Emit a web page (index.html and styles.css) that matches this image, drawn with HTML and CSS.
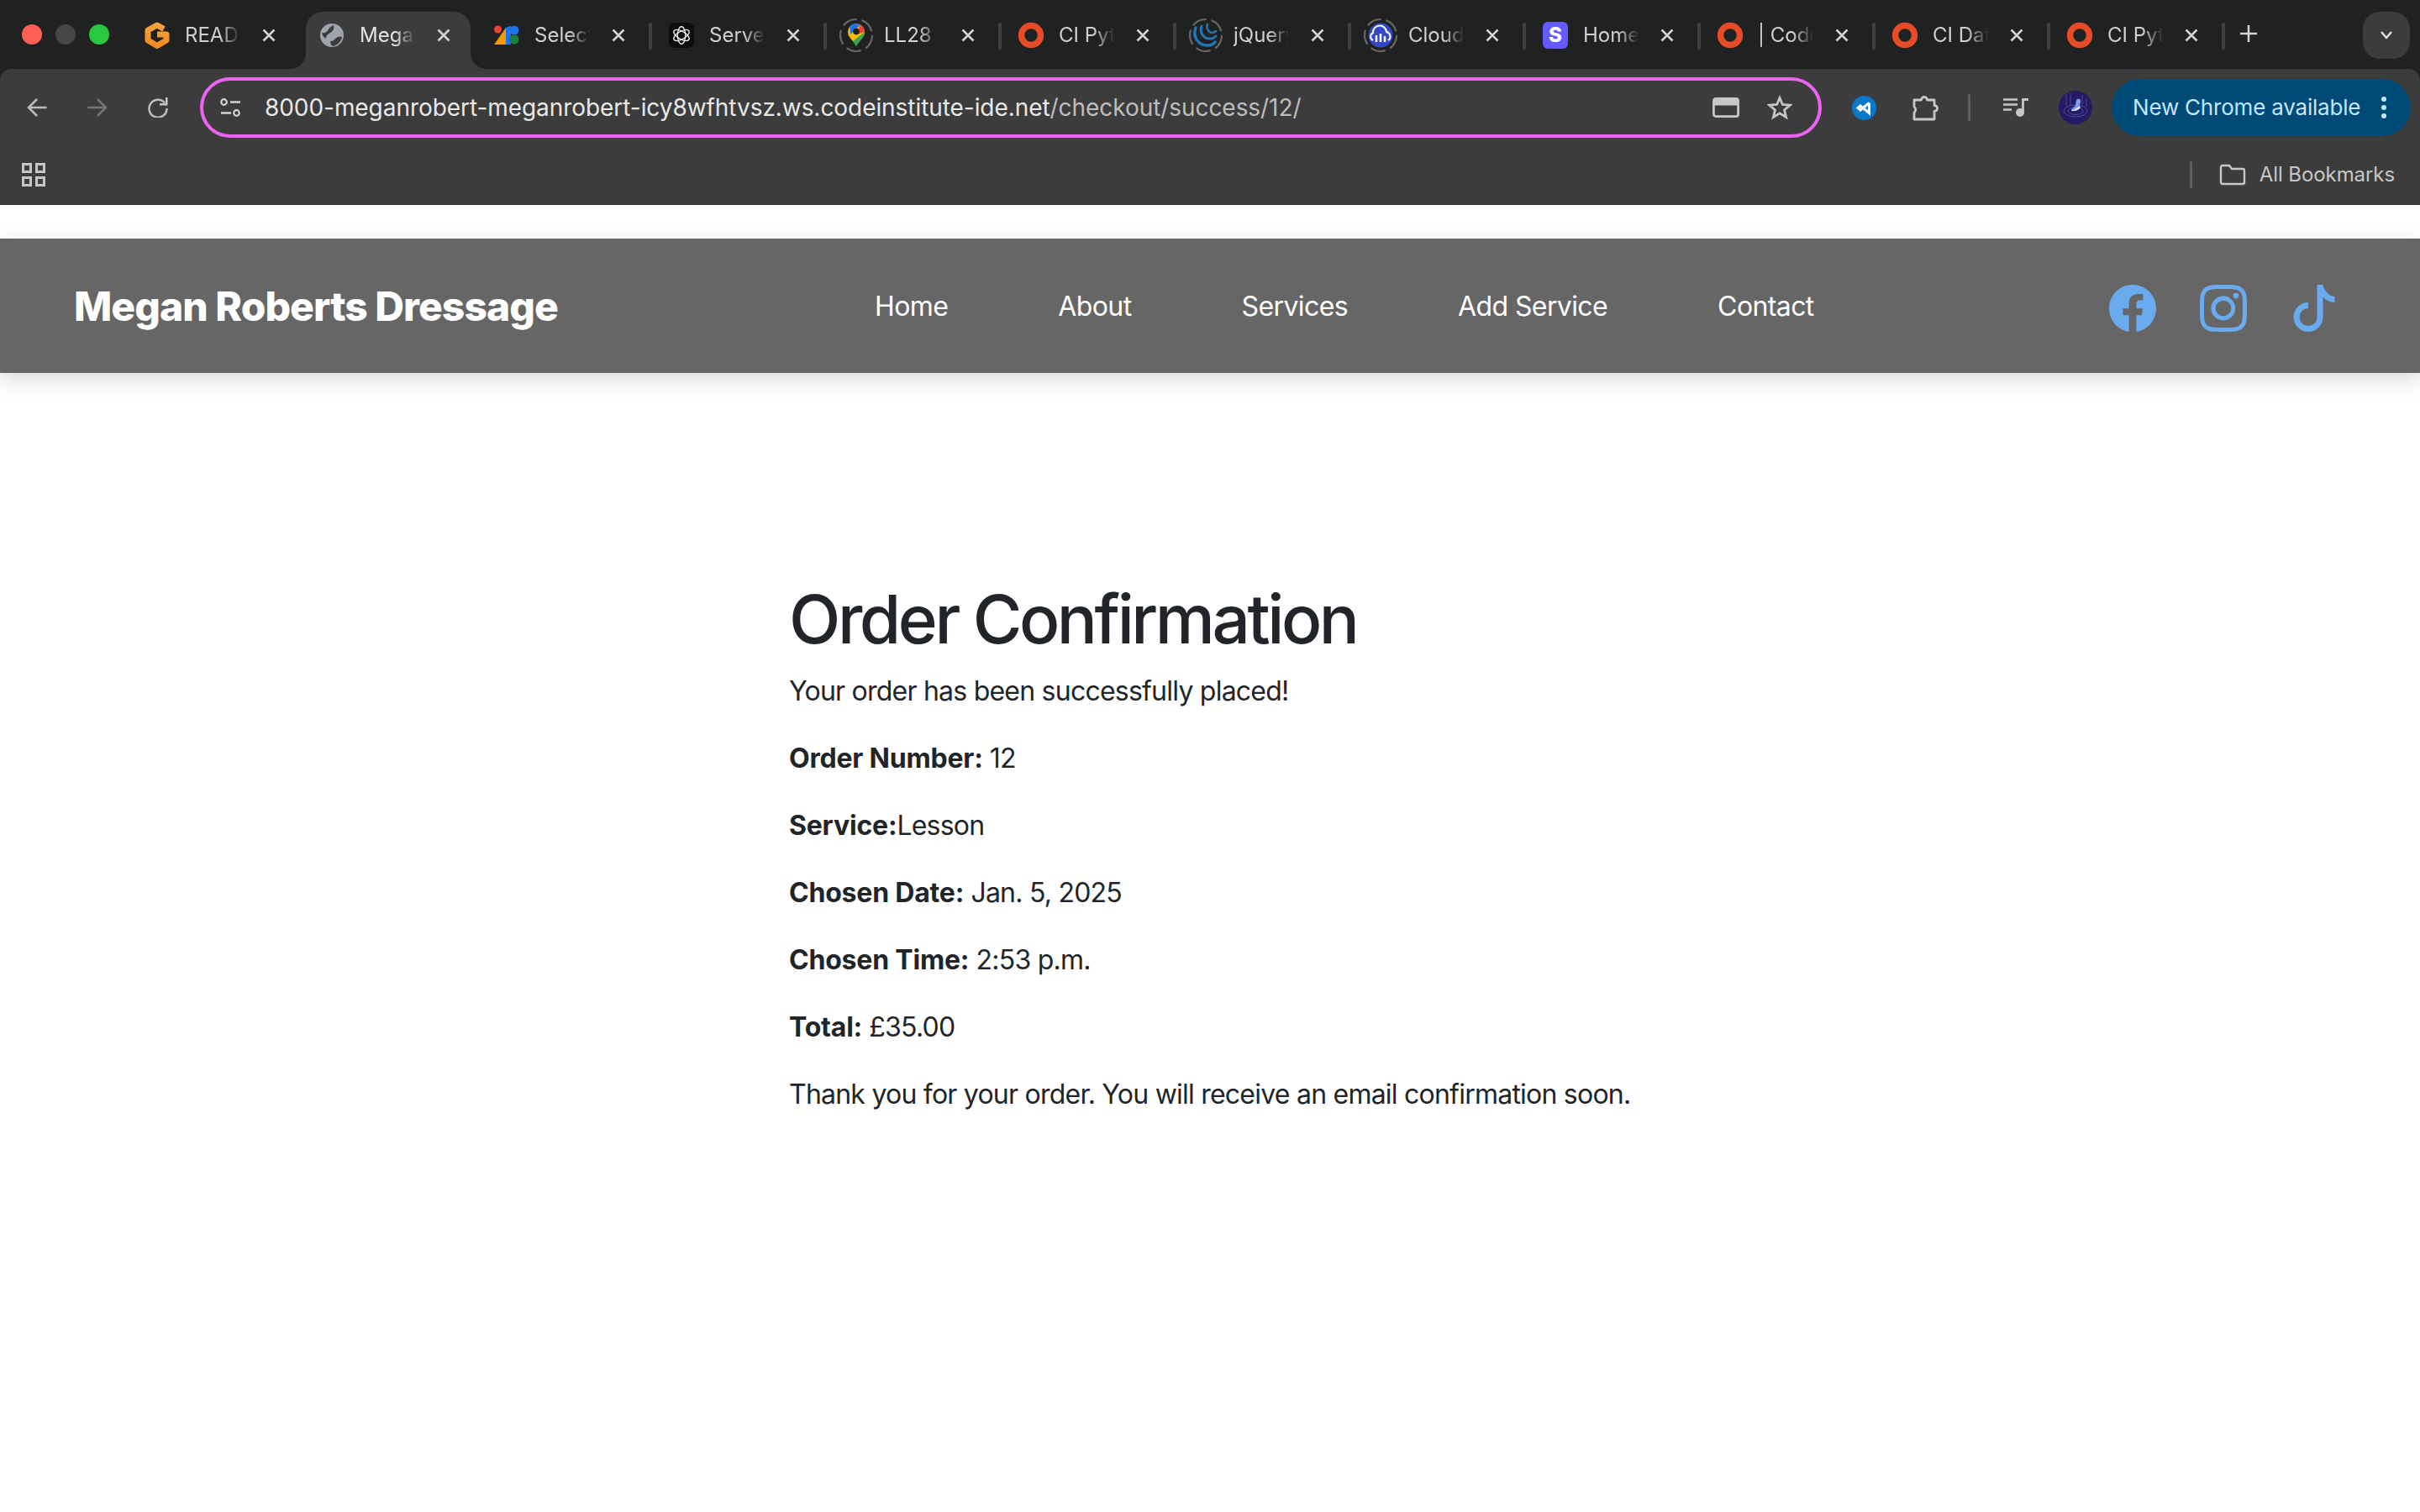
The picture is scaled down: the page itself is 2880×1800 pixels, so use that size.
FILE: index.html
```html
<!doctype html>
<html lang="en">
  <head>
    <meta charset="UTF-8" />
    <title>Order Confirmation</title>
    <link rel="stylesheet" href="styles.css">
  </head>
  <body>
    <svg class="defs" width="0" height="0">
      <symbol id="ci-ring" viewBox="0 0 30 32">
        <circle cx="15" cy="16" r="11.500" fill="none" stroke="#e64a27" stroke-width="7.500" />
      </symbol>
      <symbol id="close" viewBox="0 0 16 16">
        <path d="M1.500 1.500l13 13M14.500 1.500l-13 13" stroke="#d4d4d4" stroke-width="2.600" fill="none" />
      </symbol>
      <linearGradient id="g-orange" x1="0" y1="0" x2="0" y2="1">
        <stop offset="0" stop-color="#f8a23c" />
        <stop offset="1" stop-color="#f08a24" />
      </linearGradient>
    </svg>

    <!-- browser frame -->
    <header class="browser">
      <div class="tab-strip">
        <div class="lights">
          <span class="light light-red"></span>
          <span class="light light-grey"></span>
          <span class="light light-green"></span>
        </div>
        <div class="tabs">
          <div class="tab">
            <div class="tab-inner">
              <svg class="favicon" viewBox="0 0 30 32"><path d="M23 8.500L15 4 4 10v12l11 6.500L26 22v-7H15" fill="none" stroke="url(#g-orange)" stroke-width="7" stroke-linejoin="round" /></svg>
              <span class="tab-title">README</span>
              <svg class="tab-close"><use href="#close" /></svg>
            </div>
          </div>
          <div class="tab active">
            <div class="tab-inner">
              <svg class="favicon" viewBox="0 0 30 32"><circle cx="15" cy="16" r="14" fill="#a0a5ad" /><path d="M3 13c4 1 6-1 8-4 1-2 3-4 6-5 1 3 0 7-4 9-3 2-5 3-5 7-2-1-4-3-5-7zM27 18c-3-1-6 0-8 2-1 2-3 3-6 3 0 3 1 5 3 6 5-1 10-5 11-11z" fill="#3c3c3c" /></svg>
              <span class="tab-title">Megan Roberts</span>
              <svg class="tab-close"><use href="#close" /></svg>
            </div>
          </div>
          <div class="tab">
            <div class="tab-inner">
              <svg class="favicon" viewBox="0 0 30 32"><circle cx="4.500" cy="9" r="4.500" fill="#ea4335" /><path d="M0 27L14 7v20z" fill="#f29900" /><path d="M14 7l5-2h1v22h-6z" fill="#1a73e8" /><circle cx="24" cy="10" r="5.500" fill="#1a73e8" /><circle cx="24" cy="21" r="5.500" fill="#188038" /></svg>
              <span class="tab-title">Select</span>
              <svg class="tab-close"><use href="#close" /></svg>
            </div>
          </div>
          <div class="tab sep">
            <div class="tab-inner">
              <svg class="favicon" viewBox="0 0 32 32">
                <rect width="32" height="32" rx="7" fill="#0d0d0d" />
                <g fill="none" stroke="#fff" stroke-width="1.300">
                  <ellipse cx="16" cy="16" rx="5" ry="11" />
                  <ellipse cx="16" cy="16" rx="5" ry="11" transform="rotate(60 16 16)" />
                  <ellipse cx="16" cy="16" rx="5" ry="11" transform="rotate(120 16 16)" />
                </g>
              </svg>
              <span class="tab-title">Server</span>
              <svg class="tab-close"><use href="#close" /></svg>
            </div>
          </div>
          <div class="tab sep">
            <div class="tab-inner">
              <svg class="favicon favicon-ring" viewBox="0 0 40 40"><circle cx="20" cy="20" r="19" fill="none" stroke="#666" stroke-width="2.200" stroke-dasharray="18 5.900" /><path d="M20 6a10 10 0 0 1 10 10c0 7-7 10-10 17-3-7-10-10-10-17A10 10 0 0 1 20 6z" fill="#fbbc04" /><path d="M12.500 9.500A10 10 0 0 1 25 7.500L13 19z" fill="#1a73e8" /><path d="M25 7.500A10 10 0 0 1 30 16l-10 3z" fill="#ea4335" /><path d="M30 16c0 7-7 10-10 17l-4-6z" fill="#34a853" /><circle cx="20" cy="15.500" r="3.800" fill="#202222" /></svg>
              <span class="tab-title">LL28 5</span>
              <svg class="tab-close"><use href="#close" /></svg>
            </div>
          </div>
          <div class="tab sep">
            <div class="tab-inner">
              <svg class="favicon"><use href="#ci-ring" /></svg>
              <span class="tab-title">CI Python</span>
              <svg class="tab-close"><use href="#close" /></svg>
            </div>
          </div>
          <div class="tab sep">
            <div class="tab-inner">
              <svg class="favicon favicon-ring" viewBox="0 0 40 40"><circle cx="20" cy="20" r="19" fill="none" stroke="#666" stroke-width="2.200" stroke-dasharray="18 5.900" /><g fill="none" stroke="#1f76b5" stroke-linecap="round"><path d="M8 11c-4 11 3 21 14 21 4 0 7-1 9-4" stroke-width="3.500" /><path d="M15 9c-3 8 3 16 11 15 3 0 5-2 6-3" stroke-width="3" /><path d="M22 7c-2 6 2 10 6 10 2 0 3-1 4-2" stroke-width="2.500" /></g></svg>
              <span class="tab-title">jQuery</span>
              <svg class="tab-close"><use href="#close" /></svg>
            </div>
          </div>
          <div class="tab sep">
            <div class="tab-inner">
              <svg class="favicon favicon-ring" viewBox="0 0 40 40"><circle cx="20" cy="20" r="19" fill="none" stroke="#666" stroke-width="2.200" stroke-dasharray="18 5.900" /><circle cx="20" cy="20" r="14.500" fill="#3448c5" /><path d="M11 26a5 5 0 0 1 0-9 8 8 0 0 1 16-1 5.500 5.500 0 0 1 2 10" fill="none" stroke="#fff" stroke-width="2" /><path d="M15 20v8M20 18v10M25 21v7" stroke="#fff" stroke-width="2.500" /></svg>
              <span class="tab-title">Cloudinary</span>
              <svg class="tab-close"><use href="#close" /></svg>
            </div>
          </div>
          <div class="tab sep">
            <div class="tab-inner">
              <span class="favicon favicon-s">S</span>
              <span class="tab-title">Home</span>
              <svg class="tab-close"><use href="#close" /></svg>
            </div>
          </div>
          <div class="tab sep">
            <div class="tab-inner">
              <svg class="favicon"><use href="#ci-ring" /></svg>
              <span class="tab-title">| Code</span>
              <svg class="tab-close"><use href="#close" /></svg>
            </div>
          </div>
          <div class="tab sep">
            <div class="tab-inner">
              <svg class="favicon"><use href="#ci-ring" /></svg>
              <span class="tab-title">CI Data</span>
              <svg class="tab-close"><use href="#close" /></svg>
            </div>
          </div>
          <div class="tab sep">
            <div class="tab-inner">
              <svg class="favicon"><use href="#ci-ring" /></svg>
              <span class="tab-title">CI Python</span>
              <svg class="tab-close"><use href="#close" /></svg>
            </div>
          </div>
        </div>
        <span class="tabs-end"></span>
        <svg class="new-tab" viewBox="0 0 20 20"><path d="M10 0v20M0 10h20" stroke="#d4d4d4" stroke-width="2.500" /></svg>
        <div class="tab-search">
          <svg class="tab-search-icon" viewBox="0 0 16 10"><path d="M2 1l6 7 6-7" fill="none" stroke="#e3e3e3" stroke-width="2.400" /></svg>
        </div>
      </div>

      <div class="toolbar">
        <svg class="tool" viewBox="0 0 24 24"><path d="M23.500 12H2.500M12 2L2 12l10 10" fill="none" stroke="#bdbdbd" stroke-width="2.500" /></svg>
        <svg class="tool tool-gap" viewBox="0 0 24 24"><path d="M.5 12h21M12 2l10 10-10 10" fill="none" stroke="#757575" stroke-width="2.500" /></svg>
        <svg class="tool tool-gap" viewBox="0 0 24 24"><path d="M20 6.500A10.500 10.500 0 1 0 22.500 13" fill="none" stroke="#bdbdbd" stroke-width="2.500" /><path d="M23.500 0v9.500H14v-2.500h7V0z" fill="#c7c7c7" /></svg>

        <div class="omnibox">
          <svg class="site-icon" viewBox="0 0 24 22"><circle cx="4.500" cy="4.500" r="3.300" fill="none" stroke="#d4d4d4" stroke-width="2.200" /><path d="M12 4.500h12M1 17.500h12" stroke="#d4d4d4" stroke-width="2.400" /><circle cx="19.500" cy="17.500" r="3.300" fill="none" stroke="#d4d4d4" stroke-width="2.200" /></svg>
          <span class="url">8000-meganrobert-meganrobert-icy8wfhtvsz.ws.codeinstitute-ide.net<span class="url-path">/checkout/success/12/</span></span>
          <svg class="omni-card" viewBox="0 0 32 24"><rect x="1.400" y="1.400" width="29.200" height="21.200" rx="2.500" fill="none" stroke="#c7c7c7" stroke-width="2.800" /><rect x="2" y="2" width="28" height="7.500" fill="#c7c7c7" /></svg>
          <svg class="omni-star" viewBox="0 0 30 30"><path d="M15 3.500l3.400 8 8.800.7-6.700 5.700 2.100 8.600-7.600-4.600-7.600 4.600 2.100-8.600-6.700-5.700 8.800-.7z" fill="none" stroke="#c7c7c7" stroke-width="2.800" /></svg>
        </div>

        <svg class="ext-vscode" viewBox="0 0 29 29"><circle cx="14.500" cy="14.500" r="14.500" fill="#0a78c9" /><path d="M20.500 8.500v12L10 12l-3 2.500 3 2.500 10.500-8.500" fill="none" stroke="#fff" stroke-width="3" /></svg>
        <svg class="ext-puzzle" viewBox="0 0 32 31"><path d="M2 6h8.500a3.500 3.500 0 0 1 7 0H26v6.500a3.500 3.500 0 0 1 0 7V29H2v-8a4.500 4.500 0 0 0 0-7z" fill="none" stroke="#c7c7c7" stroke-width="2.800" stroke-linejoin="round" /></svg>
        <span class="tool-sep"></span>
        <svg class="ext-music" viewBox="0 0 30 22"><path d="M0 1.500h17M0 7.500h17M0 13.500h10" stroke="#c7c7c7" stroke-width="2.600" /><path d="M23.500 17V1.500H30" fill="none" stroke="#c7c7c7" stroke-width="2.800" /><circle cx="20" cy="17" r="5" fill="#c7c7c7" /></svg>
        <svg class="avatar" viewBox="0 0 40 40"><circle cx="20" cy="20" r="20" fill="#241a63" /><g fill="none" stroke="#5d55a8" stroke-width=".8"><ellipse cx="20" cy="24" rx="14" ry="7" /><ellipse cx="20" cy="24" rx="9" ry="4.500" /><path d="M9 4v14M14 3v14M28 5v12M33 9v10" /></g><path d="M22 10c3-1 5 1 4 4-1 2-1 3-1 5-3 4-8 6-10 5-1-2 2-3 4-5 2-3 1-7 3-9z" fill="#7d9af5" /><path d="M15 23c3 0 7-2 10-5l1 2c-3 4-8 5-11 3z" fill="#dfe6ff" /></svg>

        <div class="update-pill">
          <span>New Chrome available</span>
          <svg class="pill-dots" viewBox="0 0 6 28"><circle cx="3" cy="4" r="3" fill="#c2e7ff" /><circle cx="3" cy="14" r="3" fill="#c2e7ff" /><circle cx="3" cy="24" r="3" fill="#c2e7ff" /></svg>
        </div>
      </div>

      <div class="bookmarks">
        <svg class="apps-icon" viewBox="0 0 28 28"><g fill="none" stroke="#c7c7c7" stroke-width="3"><rect x="1.500" y="1.500" width="9" height="9" /><rect x="17.500" y="1.500" width="9" height="9" /><rect x="1.500" y="17.500" width="9" height="9" /><rect x="17.500" y="17.500" width="9" height="9" /></g></svg>
        <span class="bookmarks-sep"></span>
        <svg class="folder-icon" viewBox="0 0 32 26"><path d="M2 4a2 2 0 0 1 2-2h8l3 4h13a2 2 0 0 1 2 2v14a2 2 0 0 1-2 2H4a2 2 0 0 1-2-2z" fill="none" stroke="#c7c7c7" stroke-width="2.400" /></svg>
        <span class="bookmarks-label">All Bookmarks</span>
      </div>
    </header>

    <!-- site -->
    <nav class="navbar">
      <a class="brand" href="#">Megan Roberts Dressage</a>
      <ul class="nav-links">
        <li><a href="#">Home</a></li>
        <li><a href="#">About</a></li>
        <li><a href="#">Services</a></li>
        <li><a href="#">Add Service</a></li>
        <li><a href="#">Contact</a></li>
      </ul>
      <div class="socials">
        <svg class="social" viewBox="0 0 16 16"><path d="M16 8.049c0-4.446-3.582-8.05-8-8.05C3.58 0-.002 3.603-.002 8.05c0 4.017 2.926 7.347 6.75 7.951v-5.625h-2.03V8.05H6.75V6.275c0-2.017 1.195-3.131 3.022-3.131.876 0 1.791.157 1.791.157v1.98h-1.009c-.993 0-1.303.621-1.303 1.258v1.51h2.218l-.354 2.326H9.25V16c3.824-.604 6.75-3.934 6.75-7.951" /></svg>
        <svg class="social" viewBox="0 0 16 16"><path d="M8 0C5.829 0 5.556.01 4.703.048 3.85.088 3.269.222 2.76.42a3.9 3.9 0 0 0-1.417.923A3.9 3.9 0 0 0 .42 2.76C.222 3.268.087 3.85.048 4.7.01 5.555 0 5.827 0 8.001c0 2.172.01 2.444.048 3.297.04.852.174 1.433.372 1.942.205.526.478.972.923 1.417.444.445.89.719 1.416.923.51.198 1.09.333 1.942.372C5.555 15.99 5.827 16 8 16s2.444-.01 3.298-.048c.851-.04 1.434-.174 1.943-.372a3.9 3.9 0 0 0 1.416-.923c.445-.445.718-.891.923-1.417.197-.509.332-1.09.372-1.942C15.99 10.445 16 10.173 16 8s-.01-2.445-.048-3.299c-.04-.851-.175-1.433-.372-1.941a3.9 3.9 0 0 0-.923-1.417A3.9 3.9 0 0 0 13.24.42c-.51-.198-1.092-.333-1.943-.372C10.443.01 10.172 0 7.998 0zm-.717 1.442h.718c2.136 0 2.389.007 3.232.046.78.035 1.204.166 1.486.275.373.145.64.319.92.599s.453.546.598.92c.11.281.24.705.275 1.485.039.843.047 1.096.047 3.231s-.008 2.389-.047 3.232c-.035.78-.166 1.203-.275 1.485a2.5 2.5 0 0 1-.599.919c-.28.28-.546.453-.92.598-.28.11-.704.24-1.485.276-.843.038-1.096.047-3.232.047s-2.39-.009-3.233-.047c-.78-.036-1.203-.166-1.485-.276a2.5 2.5 0 0 1-.92-.598 2.5 2.5 0 0 1-.6-.92c-.109-.281-.24-.705-.275-1.485-.038-.843-.046-1.096-.046-3.233s.008-2.388.046-3.231c.036-.78.166-1.204.276-1.486.145-.373.319-.64.599-.92s.546-.453.92-.598c.282-.11.705-.24 1.485-.276.738-.034 1.024-.044 2.515-.045zm4.988 1.328a.96.96 0 1 0 0 1.92.96.96 0 0 0 0-1.92m-4.27 1.122a4.109 4.109 0 1 0 0 8.217 4.109 4.109 0 0 0 0-8.217m0 1.441a2.667 2.667 0 1 1 0 5.334 2.667 2.667 0 0 1 0-5.334" /></svg>
        <svg class="social" viewBox="0 0 16 16"><path d="M9 0h1.980c.144.715.54 1.617 1.235 2.512C12.895 3.389 13.797 4 15 4v2c-1.753 0-3.070-.814-4-1.829V11a5 5 0 1 1-5-5v2a3 3 0 1 0 3 3z" /></svg>
      </div>
    </nav>

    <main class="order">
      <h1>Order Confirmation</h1>
      <p>Your order has been successfully placed!</p>
      <p><strong>Order Number:</strong> 12</p>
      <p><strong>Service:</strong>Lesson</p>
      <p><strong>Chosen Date:</strong> Jan. 5, 2025</p>
      <p><strong>Chosen Time:</strong> 2:53 p.m.</p>
      <p><strong>Total:</strong> £35.00</p>
      <p>Thank you for your order. You will receive an email confirmation soon.</p>
    </main>
  </body>
</html>
```

FILE: styles.css
```css
* {
  box-sizing: border-box;
}
body {
  font-family: Inter, "Liberation Sans", sans-serif;
  font-size: 32px;
  line-height: 48px;
  letter-spacing: -0.77px;
  color: #212529;
  background-color: #fff;
  margin: 0;
}
svg {
  display: block;
  flex-shrink: 0;
}
.defs {
  position: absolute;
}

/* browser frame */
.browser {
  background-color: #202222;
  color: #d4d4d4;
  letter-spacing: 0;
}
.tab-strip {
  display: flex;
  align-items: center;
  height: 82px;
  padding-left: 26px;
}
.lights {
  display: flex;
  gap: 16px;
  width: 122px;
}
.light {
  width: 24px;
  height: 24px;
  border-radius: 50%;
}
.light-red {
  background-color: #ff5f57;
}
.light-grey {
  background-color: #444746;
}
.light-green {
  background-color: #28c840;
}
.tabs {
  display: flex;
  align-self: flex-end;
}
.tab {
  display: flex;
  align-items: center;
  width: 208px;
  height: 68px;
}
.tab::before {
  content: "";
  width: 4px;
  height: 32px;
  margin-bottom: 10px;
  border-radius: 2px;
  flex-shrink: 0;
}
.tab.sep::before,
.tabs-end {
  background-color: #3f4141;
}
.tabs-end {
  width: 4px;
  height: 32px;
  margin-top: 4px;
  border-radius: 2px;
}
.tab-inner {
  position: relative;
  display: flex;
  align-items: center;
  width: 196px;
  height: 68px;
  margin-left: 4px;
  padding: 0 24px 12px 16px;
  border-radius: 20px 20px 0 0;
}
.active .tab-inner {
  background-color: #3c3c3c;
}
.active .tab-inner::before,
.active .tab-inner::after {
  content: "";
  position: absolute;
  bottom: 0;
  width: 18px;
  height: 18px;
}
.active .tab-inner::before {
  left: -18px;
  background: radial-gradient(circle at 0 0, transparent 17.500px, #3c3c3c 18px);
}
.active .tab-inner::after {
  right: -18px;
  background: radial-gradient(circle at 100% 0, transparent 17.500px, #3c3c3c 18px);
}
.favicon {
  width: 30px;
  height: 32px;
  flex-shrink: 0;
}
.favicon-ring {
  width: 40px;
  height: 40px;
  margin: 0 -5px;
}
.favicon-s {
  display: flex;
  align-items: center;
  justify-content: center;
  font-size: 24px;
  font-weight: 800;
  line-height: 32px;
  color: #fff;
  background-color: #635bff;
  border-radius: 6px;
}
.tab-title {
  width: 70px;
  margin-left: 18px;
  font-size: 24px;
  line-height: 32px;
  color: #cfcfcf;
  white-space: nowrap;
  overflow: hidden;
  -webkit-mask-image: linear-gradient(to right, #000 60%, transparent 95%);
  mask-image: linear-gradient(to right, #000 60%, transparent 95%);
}
.active .tab-title {
  color: #e3e3e3;
}
.tab-close {
  width: 16px;
  height: 16px;
  margin-left: auto;
}
.new-tab {
  width: 20px;
  height: 20px;
  margin: 0 0 2px 18px;
}
.tab-search {
  display: flex;
  align-items: center;
  justify-content: center;
  align-self: flex-start;
  width: 56px;
  height: 56px;
  margin: 14px 12px 0 auto;
  background-color: #3c3c3c;
  border-radius: 20px;
}
.tab-search-icon {
  width: 16px;
  height: 10px;
}

.toolbar {
  display: flex;
  align-items: center;
  height: 92px;
  padding-left: 32px;
  background-color: #3c3c3c;
  border-radius: 14px 14px 0 0;
}
.tool {
  width: 24px;
  height: 24px;
}
.tool-gap {
  margin-left: 48px;
}
.omnibox {
  display: flex;
  align-items: center;
  width: 1930px;
  height: 72px;
  margin-left: 38px;
  padding: 0 31px 0 20px;
  border: 4px solid #ee62f2;
  border-radius: 36px;
  color: #e8e8e8;
}
.site-icon {
  width: 24px;
  height: 22px;
}
.url {
  margin-left: 29px;
  font-size: 28px;
  letter-spacing: -0.06px;
  white-space: nowrap;
}
.url-path {
  color: #bdbdbd;
}
.omni-card {
  width: 32px;
  height: 24px;
  margin-left: auto;
}
.omni-star {
  width: 30px;
  height: 30px;
  margin-left: 33px;
}
.ext-vscode {
  width: 29px;
  height: 29px;
  margin-left: 36px;
}
.ext-puzzle {
  width: 32px;
  height: 31px;
  margin-left: 43px;
}
.tool-sep {
  width: 3px;
  height: 32px;
  margin-left: 34px;
  background-color: #5f5f5f;
  border-radius: 2px;
}
.ext-music {
  width: 30px;
  height: 22px;
  margin-left: 39px;
}
.avatar {
  width: 40px;
  height: 40px;
  margin-left: 36px;
}
.update-pill {
  display: flex;
  align-items: center;
  justify-content: space-between;
  width: 356px;
  height: 68px;
  margin-left: 23px;
  padding: 0 29px 0 25px;
  color: #c2e7ff;
  font-size: 26px;
  letter-spacing: -0.2px;
  background-color: #004a77;
  border-radius: 34px;
}
.pill-dots {
  width: 6px;
  height: 28px;
}

.bookmarks {
  display: flex;
  align-items: center;
  height: 70px;
  padding: 0 30px 2px 26px;
  background-color: #3c3c3c;
}
.apps-icon {
  width: 28px;
  height: 28px;
}
.bookmarks-sep {
  width: 3px;
  height: 32px;
  margin-left: auto;
  background-color: #5f5f5f;
  border-radius: 2px;
}
.folder-icon {
  width: 32px;
  height: 26px;
  margin-left: 32px;
}
.bookmarks-label {
  margin-left: 16px;
  font-size: 24px;
  letter-spacing: -0.08px;
  color: #c7c7c7;
}

/* site */
.navbar {
  display: flex;
  align-items: center;
  height: 160px;
  margin-top: 40px;
  padding: 2px 98px 0 88px;
  background-color: #666;
  box-shadow: 0 8px 24px rgba(0, 0, 0, 0.15);
}
.navbar a {
  color: #fff;
  text-decoration: none;
}
.brand {
  width: 953px;
  font-size: 48px;
  font-weight: 800;
  letter-spacing: -0.95px;
}
.nav-links {
  display: flex;
  gap: 131px;
  margin: 0;
  padding: 0;
  letter-spacing: -0.6px;
  list-style: none;
}
.socials {
  display: flex;
  gap: 52px;
  margin: 3px 0 0 auto;
}
.social {
  width: 56px;
  height: 56px;
  fill: #6aabf0;
}

.order {
  padding: 245px 0 0 939px;
}
h1 {
  margin: 0 0 14px;
  font-size: 80px;
  font-weight: 500;
  line-height: 96px;
  letter-spacing: -3.45px;
}
p {
  margin: 0 0 32px;
}
strong {
  font-weight: 700;
  letter-spacing: -0.2px;
}
```
